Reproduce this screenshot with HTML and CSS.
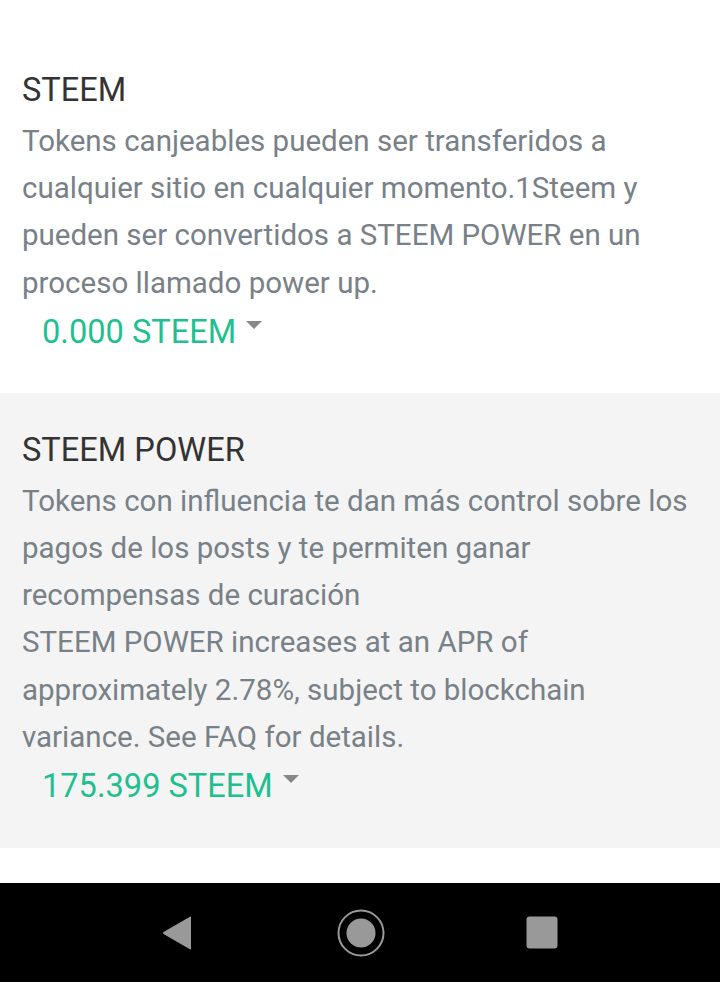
FILE: index.html
```html
<!DOCTYPE html>
<html lang="es">
<head>
    <meta charset="UTF-8">
    <meta name="viewport" content="width=device-width, initial-scale=1.0">
    <title>Wallet</title>
    <link rel="stylesheet" href="styles.css">
</head>
<body>

<div class="page">
    <div class="balance">
        <h2 class="balance-title">STEEM</h2>
        <p class="balance-desc">Tokens canjeables pueden ser transferidos a cualquier sitio en cualquier momento.1Steem y pueden ser convertidos a STEEM POWER en un proceso llamado power up.</p>
        <div class="balance-amount">0.000 STEEM <span class="caret"></span></div>
    </div>

    <div class="balance balance-alt">
        <h2 class="balance-title">STEEM POWER</h2>
        <p class="balance-desc">Tokens con influencia te dan más control sobre los pagos de los posts y te permiten ganar recompensas de curación<br>STEEM POWER increases at an APR of approximately 2.78%, subject to blockchain variance. See FAQ for details.</p>
        <div class="balance-amount">175.399 STEEM <span class="caret"></span></div>
    </div>

    <div class="spacer"></div>
</div>

<div class="navbar">
    <svg class="nav-icon" width="32" height="34" viewBox="0 0 32 34">
        <path d="M29 1.5 L29 32.5 Q29 34 27.5 33 L1.5 18 Q0.5 17 1.5 16 L27.5 1 Q29 0 29 1.5 Z" fill="#999"/>
    </svg>
    <svg class="nav-icon" width="48" height="48" viewBox="0 0 48 48">
        <circle cx="24" cy="24" r="22.5" fill="none" stroke="#999" stroke-width="2"/>
        <circle cx="24" cy="24" r="14.5" fill="#999"/>
    </svg>
    <svg class="nav-icon" width="32" height="33" viewBox="0 0 32 33">
        <rect x="0.5" y="0.5" width="31" height="32" rx="3" fill="#999"/>
    </svg>
</div>

</body>
</html>
```

FILE: styles.css
```css
body {
    margin: 0;
    padding: 0;
    font-family: Roboto, "Liberation Sans", sans-serif;
    background: #fff;
}
.page {
    width: 720px;
}
.balance {
    padding: 63px 22px 37px;
}
.balance-alt {
    background-color: #f4f4f4;
    padding-top: 30px;
    padding-bottom: 38px;
}
.balance-title {
    margin: 0;
    font-size: 32.6px;
    line-height: 55px;
    font-weight: 400;
    color: #333;
}
.balance-desc {
    margin: 0;
    font-size: 29.5px;
    line-height: 47.2px;
    color: #788187;
}
.balance-amount {
    margin: 2px 0 0 20px;
    font-size: 32.6px;
    line-height: 47px;
    color: #1fbf8f;
}
.caret {
    display: inline-block;
    width: 0;
    height: 0;
    margin-left: 2px;
    border-left: 8px solid transparent;
    border-right: 8px solid transparent;
    border-top: 8px solid #888;
    vertical-align: 14px;
}
.spacer {
    height: 35px;
}
.navbar {
    height: 99px;
    background: #000;
    display: flex;
    align-items: center;
    justify-content: center;
}
.nav-icon {
    display: block;
}
.nav-icon:nth-child(1) {
    margin-right: 143px;
}
.nav-icon:nth-child(3) {
    margin-left: 141px;
}
```
